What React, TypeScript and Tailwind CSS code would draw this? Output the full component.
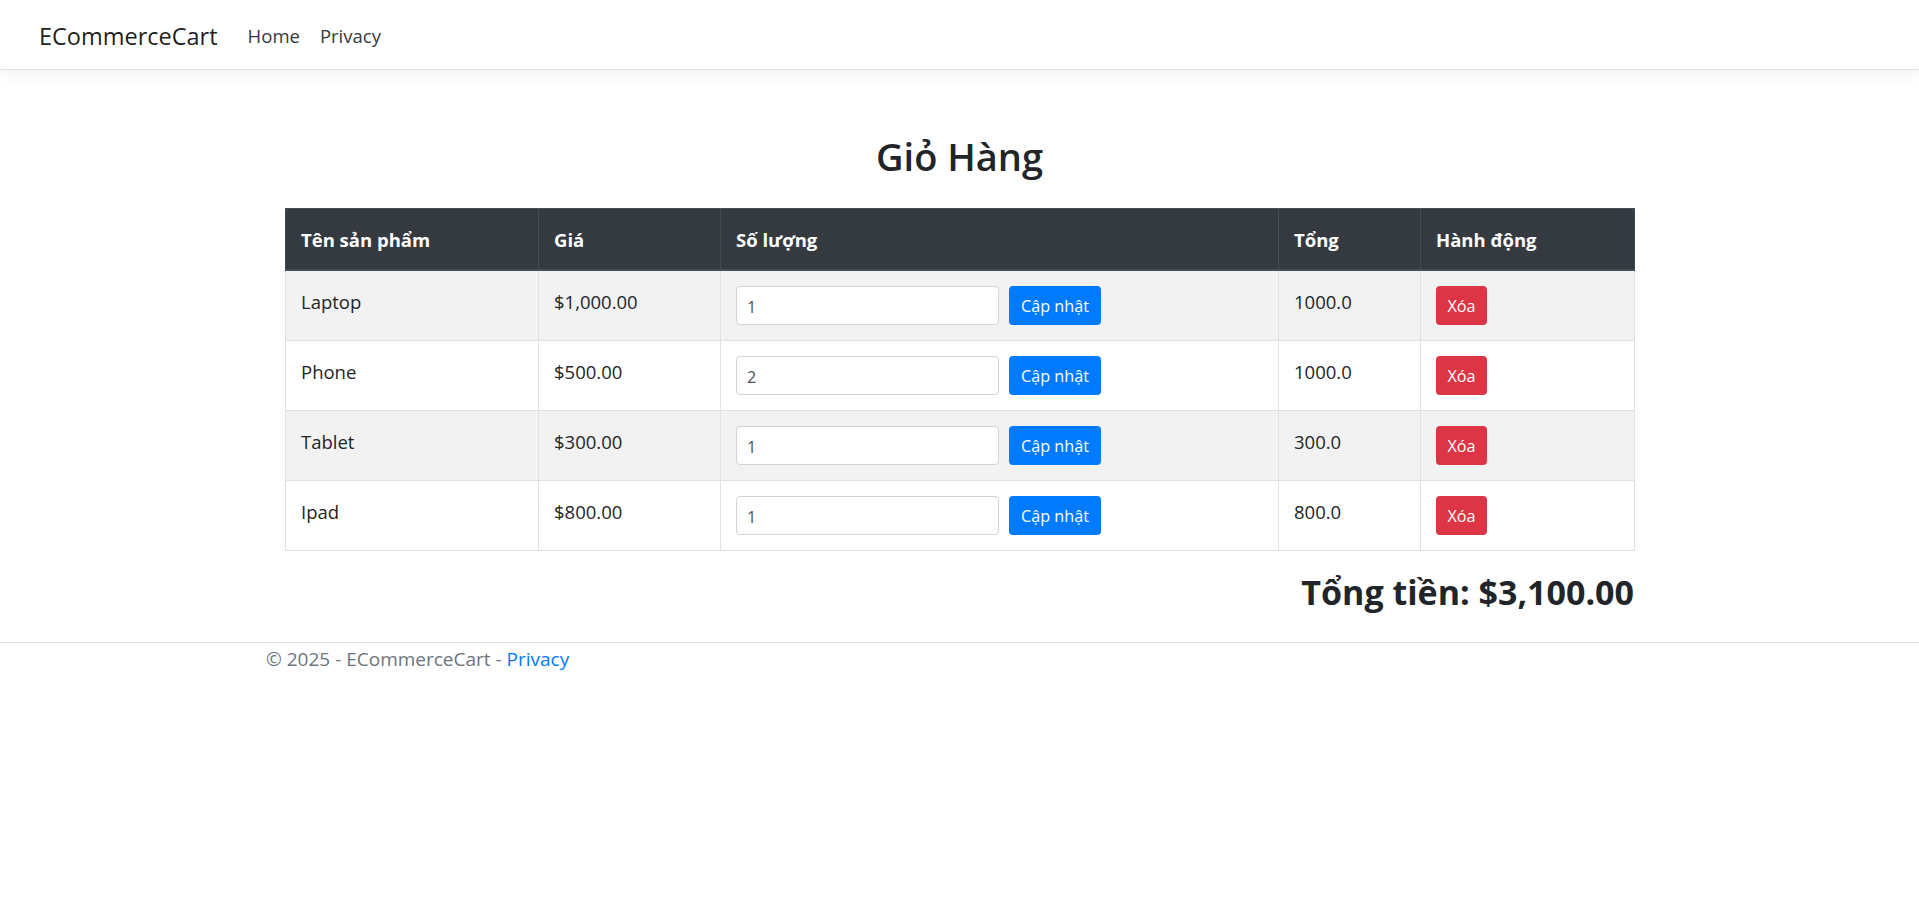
import React from 'react';

interface CartItem {
  name: string;
  price: string;
  quantity: number;
  total: string;
}

const items: CartItem[] = [
  { name: 'Laptop', price: '$1,000.00', quantity: 1, total: '1000.0' },
  { name: 'Phone', price: '$500.00', quantity: 2, total: '1000.0' },
  { name: 'Tablet', price: '$300.00', quantity: 1, total: '300.0' },
  { name: 'Ipad', price: '$800.00', quantity: 1, total: '800.0' },
];

const headers = ['Tên sản phẩm', 'Giá', 'Số lượng', 'Tổng', 'Hành động'];

const Navbar = () => (
  <header className="h-[70px] border-b border-[#dee2e6] bg-white shadow-[0_5px_15px_rgba(0,0,0,0.05)] flex items-center px-[39px] pt-[2px]">
    <a href="#" className="text-[23.5px] leading-[36px] text-black/90 mr-[20px]">
      ECommerceCart
    </a>
    <nav className="flex items-center">
      <a href="#" className="px-[10px] text-[18.5px] leading-[30px] text-[#343a40]">
        Home
      </a>
      <a href="#" className="px-[10px] text-[18.5px] leading-[30px] text-[#343a40]">
        Privacy
      </a>
    </nav>
  </header>
);

const CartTable = () => (
  <table className="w-[1349px] table-fixed border-collapse border border-[#dee2e6]">
    <colgroup>
      <col className="w-[253px]" />
      <col className="w-[182px]" />
      <col className="w-[558px]" />
      <col className="w-[142px]" />
      <col className="w-[214px]" />
    </colgroup>
    <thead>
      <tr>
        {headers.map((h) => (
          <th
            key={h}
            className="bg-[#343a40] text-white text-left font-bold text-[18.5px] leading-[30px] px-[15px] pt-[16px] pb-[14px] border border-[#454d55] border-b-2"
          >
            {h}
          </th>
        ))}
      </tr>
    </thead>
    <tbody>
      {items.map((item, i) => (
        <tr key={item.name} className={i % 2 === 0 ? 'bg-[#f2f2f2]' : 'bg-white'}>
          <td className="align-top px-[15px] pt-[16px] pb-[15px] border border-[#dee2e6] text-[18.5px] leading-[30px]">
            {item.name}
          </td>
          <td className="align-top px-[15px] pt-[16px] pb-[15px] border border-[#dee2e6] text-[18.5px] leading-[30px]">
            {item.price}
          </td>
          <td className="align-top px-[15px] pt-[15px] pb-[15px] border border-[#dee2e6]">
            <div className="flex items-center gap-[10px]">
              <input
                type="number"
                defaultValue={item.quantity}
                className="w-[263px] h-[39px] bg-white border border-[#ced4da] rounded-[4px] px-[10px] pt-[2px] text-[16.2px] text-[#495057] outline-none [appearance:textfield] [&::-webkit-inner-spin-button]:appearance-none"
              />
              <button className="w-[92px] h-[39px] rounded-[4px] bg-[#007bff] text-white text-[16.2px] leading-[26px]">
                Cập nhật
              </button>
            </div>
          </td>
          <td className="align-top px-[15px] pt-[16px] pb-[15px] border border-[#dee2e6] text-[18.5px] leading-[30px]">
            {item.total}
          </td>
          <td className="align-top px-[15px] pt-[15px] pb-[15px] border border-[#dee2e6]">
            <button className="w-[51px] h-[39px] rounded-[4px] bg-[#dc3545] text-white text-[16.2px] leading-[26px]">
              Xóa
            </button>
          </td>
        </tr>
      ))}
    </tbody>
  </table>
);

export default function App() {
  return (
    <div className="min-h-screen bg-white text-[#212529] font-['Open_Sans','Noto_Sans',sans-serif]">
      <Navbar />
      <main className="w-[1349px] mx-auto">
        <h2 className="mt-[62px] mb-[28px] text-center text-[38px] leading-[48px] font-semibold">
          Giỏ Hàng
        </h2>
        <CartTable />
        <h3 className="mt-[20px] text-right font-bold text-[34px] leading-[42px]">
          Tổng tiền: $3,100.00
        </h3>
      </main>
      <footer className="mt-[29px] border-t border-[#dee2e6] pt-[1px]">
        <div className="w-[1425px] mx-auto px-[19px] text-[19px] leading-[30px] text-[#6c757d]">
          © 2025 - ECommerceCart -{' '}
          <a href="#" className="text-[#007bff]">
            Privacy
          </a>
        </div>
      </footer>
    </div>
  );
}
